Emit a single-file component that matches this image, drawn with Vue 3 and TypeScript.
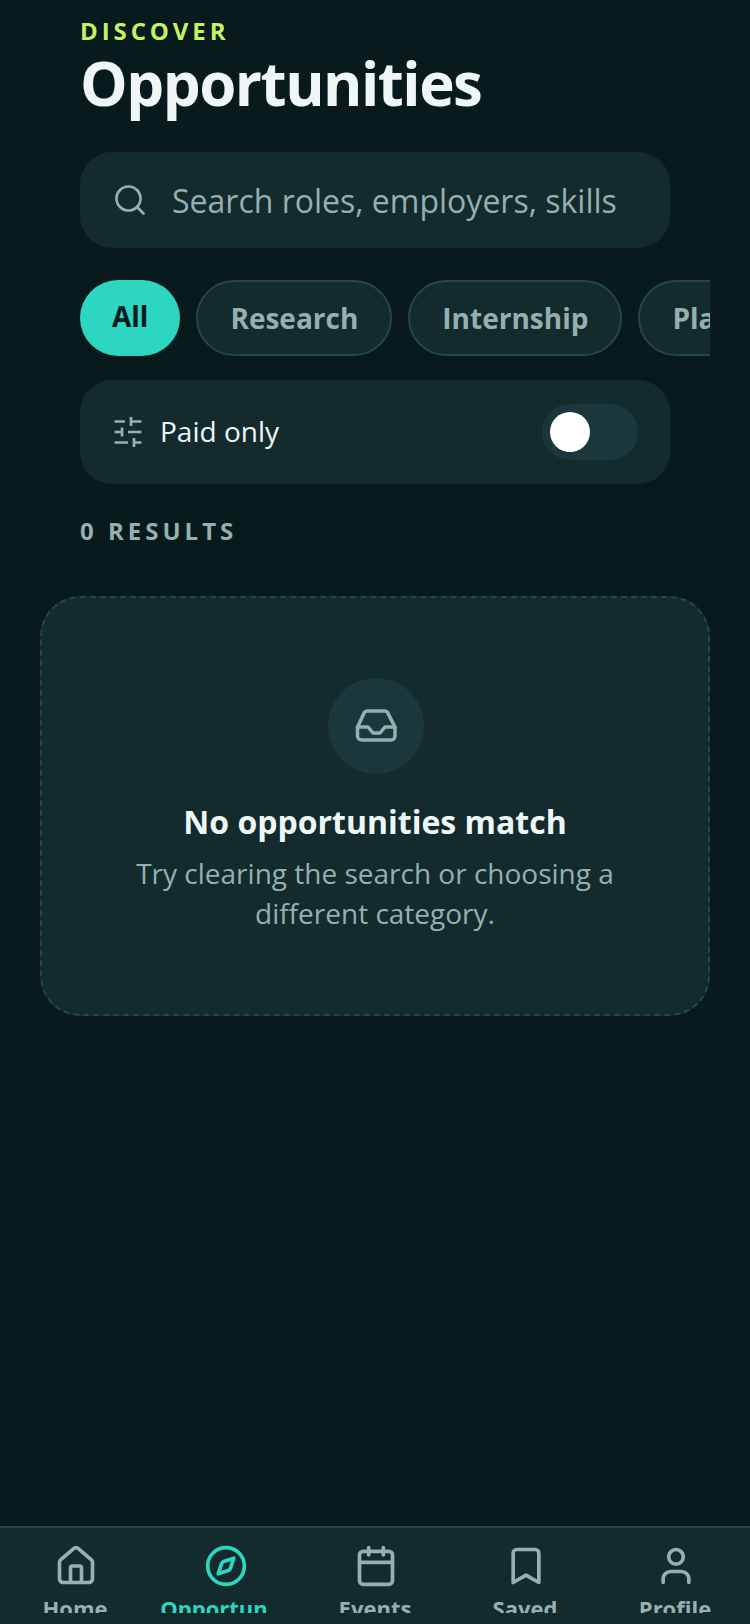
<script setup lang="ts">
const chips = ['All', 'Research', 'Internship', 'Placement']

// circles are written as two arcs so every icon is just a list of paths
const tabs = [
  {
    label: 'Home',
    active: false,
    paths: [
      'M15 21v-8a1 1 0 0 0-1-1h-4a1 1 0 0 0-1 1v8',
      'M3 10a2 2 0 0 1 .709-1.528l7-5.999a2 2 0 0 1 2.582 0l7 5.999A2 2 0 0 1 21 10v9a2 2 0 0 1-2 2H5a2 2 0 0 1-2-2z',
    ],
  },
  {
    label: 'Opportun',
    active: true,
    paths: [
      'M2 12a10 10 0 1 0 20 0a10 10 0 1 0-20 0',
      'm16.240 7.760-1.804 5.411a2 2 0 0 1-1.265 1.265L7.760 16.240l1.804-5.411a2 2 0 0 1 1.265-1.265z',
    ],
  },
  {
    label: 'Events',
    active: false,
    paths: ['M5 4h14a2 2 0 0 1 2 2v14a2 2 0 0 1-2 2H5a2 2 0 0 1-2-2V6a2 2 0 0 1 2-2z', 'M8 2v4', 'M16 2v4', 'M3 10h18'],
  },
  { label: 'Saved', active: false, paths: ['m19 21-7-4-7 4V5a2 2 0 0 1 2-2h10a2 2 0 0 1 2 2v16z'] },
  {
    label: 'Profile',
    active: false,
    paths: ['M8 7a4 4 0 1 0 8 0a4 4 0 1 0-8 0', 'M19 21v-2a4 4 0 0 0-4-4H9a4 4 0 0 0-4 4v2'],
  },
]
</script>

<template>
  <div class="screen">
    <main class="content">
      <header class="head">
        <div class="eyebrow">DISCOVER</div>
        <h1 class="title">Opportunities</h1>
      </header>

      <div class="search">
        <svg class="search-icon" viewBox="0 0 24 24">
          <circle cx="11" cy="11" r="8" />
          <path d="m21 21-4.300-4.300" />
        </svg>
        <span class="placeholder">Search roles, employers, skills</span>
      </div>

      <div class="chips">
        <div v-for="chip in chips" :key="chip" :class="['chip', chip === 'All' ? 'chip--on' : '']">{{ chip }}</div>
      </div>

      <div class="filter">
        <svg class="filter-icon" viewBox="0 0 24 24">
          <path d="M10 5H3M21 5h-7M14 2v6M8 12H3M21 12h-9M8 9v6M12 19H3M21 19h-5M16 16v6" />
        </svg>
        <span class="filter-label">Paid only</span>
        <div class="toggle"><div class="knob"></div></div>
      </div>

      <div class="count">0 RESULTS</div>

      <section class="empty">
        <div class="empty-circle">
          <svg class="empty-icon" viewBox="0 0 24 24">
            <path d="M7.500 4.500h9a1.500 1.500 0 0 1 1.300.8l3.700 7.200V17a2 2 0 0 1-2 2H4.750a2 2 0 0 1-2-2v-4.500L6.200 5.300a1.500 1.500 0 0 1 1.300-.8z" />
            <path d="M2.750 12.500H8l2.500 3h3.500l2.500-3h5" />
          </svg>
        </div>
        <div class="empty-title">No opportunities match</div>
        <p class="empty-text">Try clearing the search or choosing a different category.</p>
      </section>
    </main>

    <nav class="tabbar">
      <div v-for="tab in tabs" :key="tab.label" :class="['tab', tab.active ? 'tab--on' : '']">
        <svg class="tab-icon" viewBox="0 0 24 24">
          <path v-for="d in tab.paths" :key="d" :d="d" />
        </svg>
        <div class="tab-label">{{ tab.label }}</div>
      </div>
    </nav>
  </div>
</template>

<style>
html, body { background: #091a1d; }
</style>

<style scoped>
.screen {
  width: 750px;
  height: 1624px;
  display: flex;
  flex-direction: column;
  overflow: hidden;
  background: #091a1d;
  font-family: "Open Sans", "Noto Sans", sans-serif;
}
.content {
  flex: 1;
  padding: 16px 40px 0;
}
.head { padding-left: 40px; }
.eyebrow {
  color: #c6f25f;
  font-size: 24px;
  line-height: 30px;
  font-weight: 700;
  letter-spacing: 3.9px;
}
.title {
  margin: 0;
  color: #eef7f6;
  font-size: 60px;
  line-height: 74px;
  font-weight: 700;
  letter-spacing: -1.5px;
}
.search {
  margin: 32px 40px 0;
  height: 96px;
  padding: 0 32px;
  display: flex;
  align-items: center;
  gap: 24px;
  background: #132b2d;
  border-radius: 32px;
}
.search-icon {
  width: 36px;
  height: 36px;
  flex: none;
  fill: none;
  stroke: #94b0b0;
  stroke-width: 1.8;
  stroke-linecap: round;
}
.placeholder {
  color: #94b0b0;
  font-size: 32px;
  white-space: nowrap;
}
.chips {
  margin: 32px 0 0 40px;
  display: flex;
  gap: 16px;
  overflow: hidden;
}
.chip {
  flex: none;
  height: 76px;
  padding: 0 32px;
  box-sizing: border-box;
  display: flex;
  align-items: center;
  background: #132b2d;
  border: 2px solid #264548;
  border-radius: 38px;
  color: #94b0b0;
  font-size: 28px;
  font-weight: 700;
}
.chip--on {
  padding-bottom: 4px;
  border: 0;
  background: #2dd6c1;
  color: #091a1d;
}
.filter {
  margin: 24px 40px 0;
  height: 104px;
  padding: 0 32px 0 30px;
  display: flex;
  align-items: center;
  background: #132b2d;
  border-radius: 32px;
}
.filter-icon {
  width: 36px;
  height: 36px;
  flex: none;
  fill: none;
  stroke: #94b0b0;
  stroke-width: 1.8;
}
.filter-label {
  margin-left: 14px;
  padding-bottom: 2px;
  color: #eef7f6;
  font-size: 28px;
}
.toggle {
  margin-left: auto;
  width: 96px;
  height: 56px;
  box-sizing: border-box;
  padding: 8px;
  background: #1a383b;
  border-radius: 28px;
}
.knob {
  width: 40px;
  height: 40px;
  background: #fff;
  border-radius: 50%;
}
.count {
  margin: 31px 40px 0;
  color: #94b0b0;
  font-size: 24px;
  line-height: 32px;
  font-weight: 700;
  letter-spacing: 4px;
}
.empty {
  margin-top: 49px;
  height: 420px;
  box-sizing: border-box;
  padding-top: 80px;
  display: flex;
  flex-direction: column;
  align-items: center;
  background: #132b2d;
  border: 2px dashed #264548;
  border-radius: 40px;
}
.empty-circle {
  width: 96px;
  height: 96px;
  margin-left: 2px;
  display: flex;
  align-items: center;
  justify-content: center;
  background: #1a383b;
  border-radius: 50%;
}
.empty-icon {
  width: 48px;
  height: 48px;
  fill: none;
  stroke: #94b0b0;
  stroke-width: 1.75;
  stroke-linejoin: round;
  stroke-linecap: round;
}
.empty-title {
  margin-top: 26px;
  color: #eef7f6;
  font-size: 32px;
  line-height: 44px;
  font-weight: 700;
}
.empty-text {
  margin: 9px 60px 0;
  color: #94b0b0;
  font-size: 28px;
  line-height: 40px;
  text-align: center;
}
.tabbar {
  flex: none;
  height: 98px;
  box-sizing: border-box;
  display: grid;
  grid-template-columns: repeat(5, 1fr);
  padding-top: 16px;
  background: #132b2d;
  border-top: 2px solid #264548;
}
.tab {
  height: 69px;
  overflow: hidden;
  display: flex;
  flex-direction: column;
  align-items: center;
  color: #94b0b0;
}
.tab--on { color: #2dd6c1; }
.tab-icon {
  width: 44px;
  height: 44px;
  margin-left: 2px;
  flex: none;
  fill: none;
  stroke: currentColor;
  stroke-width: 2;
  stroke-linejoin: round;
  stroke-linecap: round;
}
.tab-label {
  margin-top: 5px;
  font-size: 22px;
  line-height: 30px;
  font-weight: 700;
}
.tab--on .tab-label { padding-right: 22px; }
</style>
